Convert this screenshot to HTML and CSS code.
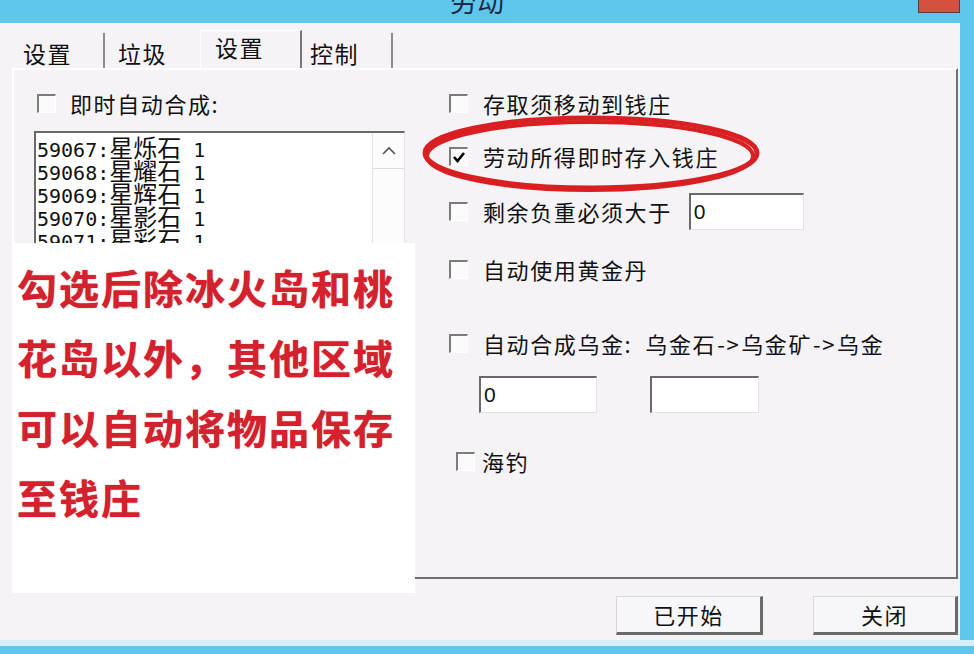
FILE: index.html
```html
<!DOCTYPE html>
<html lang="zh-CN">
<head>
    <meta charset="UTF-8">
    <title>劳动</title>
    <link rel="stylesheet" href="styles.css">
</head>
<body>
    <div class="window">
        <div class="titlebar">
            <span class="title">劳动</span>
            <span class="close"></span>
        </div>
        <div class="main">
            <div class="dialog">
                <div class="tabs">
                    <div class="tab t1">设置</div>
                    <div class="tab t2">垃圾</div>
                    <div class="tab active">设置</div>
                    <div class="tab t4">控制</div>
                </div>
                <div class="panel">
                    <div class="col-left">
                        <div class="row"><span class="chk"></span>即时自动合成:</div>
                        <div class="listbox">
                            <div class="items">
                                <div>59067:<span class="nm">星烁石</span> 1</div>
                                <div>59068:<span class="nm">星耀石</span> 1</div>
                                <div>59069:<span class="nm">星辉石</span> 1</div>
                                <div>59070:<span class="nm">星影石</span> 1</div>
                                <div>59071:<span class="nm">星彩石</span> 1</div>
                            </div>
                            <div class="scroll">
                                <div class="up">
                                    <svg width="14" height="9" viewBox="0 0 14 9"><path d="M1 8 L7 2 L13 8" fill="none" stroke="#555" stroke-width="1.6"/></svg>
                                </div>
                            </div>
                        </div>
                    </div>
                    <div class="col-right">
                        <div class="row r1"><span class="chk"></span>存取须移动到钱庄</div>
                        <div class="row r2"><span class="chk">
                            <svg width="14" height="14" viewBox="0 0 14 14"><path d="M2 7 L5.5 11 L12 3" fill="none" stroke="#000" stroke-width="2.6"/></svg>
                        </span>劳动所得即时存入钱庄</div>
                        <div class="row r3"><span class="chk"></span>剩余负重必须大于<span class="field w115">0</span></div>
                        <div class="row r4"><span class="chk"></span>自动使用黄金丹</div>
                        <div class="row r5"><span class="chk"></span>自动合成乌金:&nbsp;&nbsp;乌金石<span class="arr">-&gt;</span>乌金矿<span class="arr">-&gt;</span>乌金</div>
                        <div class="inputs">
                            <span class="field w118">0</span>
                            <span class="field w109"></span>
                        </div>
                        <div class="row r7"><span class="chk"></span>海钓</div>
                    </div>
                </div>
                <div class="buttons">
                    <div class="btn b1">已开始</div>
                    <div class="btn b2">关闭</div>
                </div>

                <!-- annotation pasted over the screenshot -->
                <div class="note">勾选后除冰火岛和桃<br>花岛以外，其他区域<br>可以自动将物品保存<br>至钱庄</div>
                <svg class="mark" width="960" height="617" viewBox="0 0 960 617">
                    <ellipse cx="591" cy="130" rx="166" ry="35" fill="none" stroke="#d91f22" stroke-width="5"/>
                    <ellipse cx="590" cy="133" rx="163" ry="34" fill="none" stroke="#d91f22" stroke-width="4"/>
                </svg>
            </div>
        </div>
        <div class="bottom"></div>
    </div>
</body>
</html>
```

FILE: styles.css
```css
body{
    margin:0;
    padding:0;
    background:#5fc6ec;
}
.window{
    width:974px;
    height:654px;
    overflow:hidden;
    font-family:"Noto Sans CJK SC","Liberation Sans",sans-serif;
    color:#111;
}
.titlebar{
    height:23px;
    display:flex;
    background:#5fc6ec;
    overflow:hidden;
}
.title{
    margin-left:450px;
    margin-top:-13px;
    font-size:27px;
    line-height:27px;
    color:#1b2a44;
}
.close{
    margin-left:auto;
    margin-right:14px;
    width:42px;
    height:13px;
    box-sizing:border-box;
    background:#d6503f;
    border:1px solid #5a3a36;
    border-top:none;
}
.main{
    display:flex;
    height:617px;
}
.dialog{
    position:relative;
    width:960px;
    background:#f5f3f6;
    display:flex;
    flex-direction:column;
}
.bottom{
    height:14px;
    box-sizing:border-box;
    border-top:6px solid #d3f0fa;
    background:#5fc6ec;
}

/* tabs */
.tabs{
    height:45px;
    display:flex;
    align-items:flex-end;
    padding-left:12px;
    font-size:23px;
    letter-spacing:1.5px;
}
.tab{
    height:35px;
    line-height:40px;
    box-sizing:border-box;
    white-space:nowrap;
}
.t1{
    width:93px;
    padding-left:11px;
    border-right:2px solid #8c8c8c;
}
.t2{
    width:95px;
    padding-left:13px;
}
.tab.active{
    width:102px;
    height:38px;
    line-height:33px;
    padding-left:14px;
    border-left:1px solid #fff;
    border-top:1px solid #fff;
    border-right:2px solid #7a7a7a;
}
.t4{
    width:91px;
    padding-left:8px;
    border-right:2px solid #8c8c8c;
}

/* tab page */
.panel{
    margin-left:12px;
    width:946px;
    height:511px;
    box-sizing:border-box;
    border-top:2px solid #fff;
    border-left:2px solid #fff;
    border-right:2px solid #6e6e6e;
    border-bottom:2px solid #6e6e6e;
    padding-top:16px;
    display:flex;
    font-size:22px;
    letter-spacing:1.6px;
}
.row{
    height:34px;
    display:flex;
    align-items:center;
    white-space:nowrap;
}
.chk{
    flex:none;
    width:19px;
    height:19px;
    box-sizing:border-box;
    border-top:2px solid #7c7c7c;
    border-left:2px solid #7c7c7c;
    border-right:1px solid #fff;
    border-bottom:1px solid #fff;
    background:#fafafa;
    margin-right:15px;
    display:flex;
    align-items:center;
    justify-content:center;
}
.col-left{
    margin-left:20px;
    width:371px;
}
.col-left .chk{
    margin-left:3px;
    margin-right:14px;
}
.listbox{
    margin-top:11px;
    height:115px;
    box-sizing:border-box;
    border-top:2px solid #6a6a6a;
    border-left:2px solid #6a6a6a;
    border-right:1px solid #e4e4e4;
    border-bottom:1px solid #e4e4e4;
    background:#fff;
    display:flex;
    overflow:hidden;
}
.items{
    flex:1;
    padding:2px 0 0 1px;
    font-family:"DejaVu Sans Mono","Noto Sans CJK SC",monospace;
    font-size:20px;
    line-height:23px;
    letter-spacing:0;
    white-space:nowrap;
}
.items div{
    height:23px;
}
.items .nm{
    font-family:"Noto Sans CJK SC",sans-serif;
    font-size:24px;
    line-height:23px;
}
.scroll{
    width:31px;
    border-left:1px solid #e2e2e2;
    background:#fcfcfc;
}
.up{
    height:35px;
    border-bottom:1px solid #dcdcdc;
    display:flex;
    align-items:center;
    justify-content:center;
}
.col-right{
    margin-left:44px;
    display:flex;
    flex-direction:column;
}
.r2{ margin-top:19px; }
.r3{ margin-top:19px; height:38px; }
.r4{ margin-top:22px; }
.r5{ margin-top:40px; }
.r7{ margin-top:31px; }
.r7 .chk{
    margin-left:7px;
    margin-right:7px;
}
.arr{
    margin:0 1px;
}
.field{
    height:37px;
    box-sizing:border-box;
    border-top:2px solid #6a6a6a;
    border-left:2px solid #6a6a6a;
    border-right:1px solid #e2e2e2;
    border-bottom:1px solid #e2e2e2;
    background:#fff;
    padding-left:3px;
    font-family:"Liberation Sans",sans-serif;
    font-size:21px;
    line-height:34px;
    letter-spacing:0;
}
.r3 .field{ margin-left:17px; }
.w115{ width:115px; }
.w118{ width:118px; }
.w109{ width:109px; }
.inputs{
    margin-top:16px;
    padding-left:30px;
    display:flex;
    gap:53px;
}

/* bottom buttons */
.buttons{
    margin-top:17px;
    padding-right:2px;
    display:flex;
    justify-content:flex-end;
    gap:50px;
}
.btn{
    height:39px;
    box-sizing:border-box;
    border-top:1px solid #d8d8d8;
    border-left:1px solid #d8d8d8;
    border-right:3px solid #6a6a6a;
    border-bottom:3px solid #6a6a6a;
    background:#f7f6f8;
    font-size:22px;
    letter-spacing:1.5px;
    line-height:35px;
    text-align:center;
}
.b1{ width:147px; }
.b2{ width:145px; }

/* overlays */
.note{
    position:absolute;
    left:12px;
    top:220px;
    width:403px;
    height:350px;
    box-sizing:border-box;
    padding:9px 0 0 5px;
    background:#fff;
    color:#d3212d;
    font-size:40px;
    font-weight:700;
    line-height:70px;
    letter-spacing:2px;
    white-space:nowrap;
    text-shadow:0 0 1px #d3212d;
}
.mark{
    position:absolute;
    left:0;
    top:0;
    pointer-events:none;
}
```
